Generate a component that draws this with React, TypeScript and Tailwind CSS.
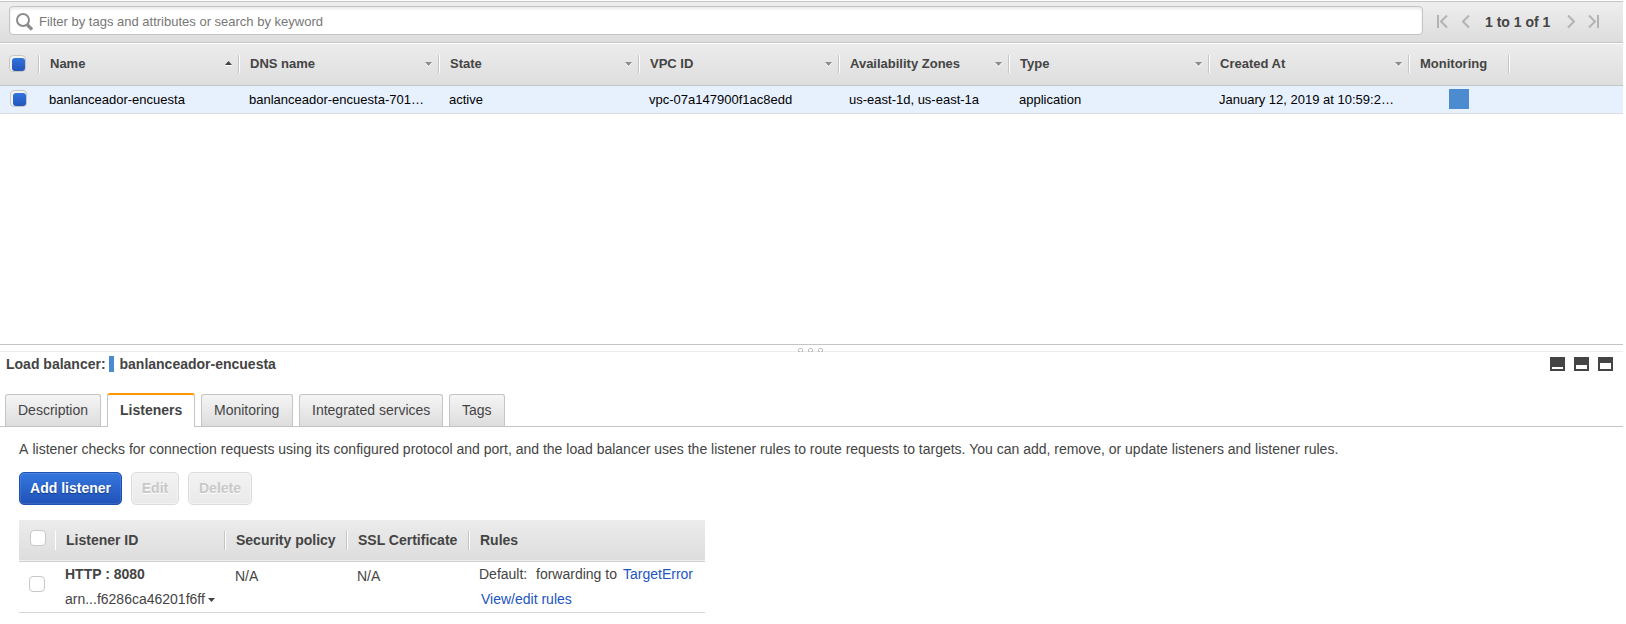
import React from "react";

type Column = { label: string; width: string; value: string; arrow: "up" | "down" };

const columns: Column[] = [
  { label: "Name", width: "w-[200px]", value: "banlanceador-encuesta", arrow: "up" },
  { label: "DNS name", width: "w-[200px]", value: "banlanceador-encuesta-701…", arrow: "down" },
  { label: "State", width: "w-[200px]", value: "active", arrow: "down" },
  { label: "VPC ID", width: "w-[200px]", value: "vpc-07a147900f1ac8edd", arrow: "down" },
  { label: "Availability Zones", width: "w-[170px]", value: "us-east-1d, us-east-1a", arrow: "down" },
  { label: "Type", width: "w-[200px]", value: "application", arrow: "down" },
  { label: "Created At", width: "w-[200px]", value: "January 12, 2019 at 10:59:2…", arrow: "down" },
];

function Divider({ className = "" }: { className?: string }) {
  return <span className={`w-[2px] shrink-0 border-l border-[#c4c4c4] bg-white ${className}`} />;
}

function Arrow({ up = false }: { up?: boolean }) {
  return (
    <svg width="7" height="6" viewBox="0 0 7 6" className="block shrink-0">
      <path d={up ? "M0 5h7v1H0z" : "M0 2h7L3.5 6z"} fill="#fff" />
      <path d={up ? "M0 5h7L3.5 1z" : "M0 1h7L3.5 5z"} fill={up ? "#444" : "#8c8c8c"} />
    </svg>
  );
}

function CheckedBox() {
  return (
    <span className="flex h-[17px] w-[17px] shrink-0 items-end justify-end rounded-[4px] border border-[#c6c6c6] bg-[#f3f3f3]">
      <span className="h-[13px] w-[13px] rounded-[3px] bg-gradient-to-b from-[#3274dc] to-[#2355ba]" />
    </span>
  );
}

function EmptyBox() {
  return <span className="block h-4 w-4 rounded-[4px] border border-[#c8c8c8] bg-white" />;
}

function Pager() {
  return (
    <div className="ml-[14px] flex h-[14px] items-center">
      <svg width="11" height="14" viewBox="0 0 11 14" fill="none" stroke="#b3b3b3" strokeWidth="2">
        <path d="M1 0v13M10 .5L4 6.5l6 6" />
      </svg>
      <svg width="8" height="14" viewBox="0 0 8 14" fill="none" stroke="#b3b3b3" strokeWidth="2" className="ml-[14px]">
        <path d="M7 .5L1 6.5l6 6" />
      </svg>
      <span className="ml-[15px] w-[67px] text-sm leading-4 font-bold whitespace-nowrap">1 to 1 of 1</span>
      <svg width="8" height="14" viewBox="0 0 8 14" fill="none" stroke="#b3b3b3" strokeWidth="2" className="ml-[15px]">
        <path d="M1 .5l6 6-6 6" />
      </svg>
      <svg width="11" height="14" viewBox="0 0 11 14" fill="none" stroke="#b3b3b3" strokeWidth="2" className="ml-[13px]">
        <path d="M1 .5l6 6-6 6M10 0v13" />
      </svg>
    </div>
  );
}

function SearchBar() {
  return (
    <div className="flex h-[42px] border-y border-[#c4c6c4] bg-gradient-to-b from-[#eeeeee] to-[#dddddd] pt-1 pl-[9px]">
      <div className="flex h-[29px] w-[1414px] items-center rounded-[4px] border border-[#c4c4c4] bg-white pl-[6px] shadow-[inset_0_2px_3px_#e9e9e9]">
        <svg width="17" height="18" viewBox="0 0 17 18" fill="none" stroke="#8c8c8c" className="mt-[3px] shrink-0">
          <circle cx="7" cy="7" r="6" strokeWidth="2" />
          <path d="M11 11.5l5 5" strokeWidth="3.2" />
        </svg>
        <span className="mt-[2px] ml-[6px] text-[13px] leading-[15px] text-[#777]">
          Filter by tags and attributes or search by keyword
        </span>
      </div>
      <div className="flex h-[32px] items-center">
        <Pager />
      </div>
    </div>
  );
}

function BalancerTable() {
  return (
    <>
      <div className="flex h-[43px] border-t border-b border-t-white border-b-[#c4c4c4] bg-gradient-to-b from-[#ececec] to-[#dedede] pt-[11px]">
        <div className="w-[38px] pl-[9px]"><CheckedBox /></div>
        {columns.map((c) => (
          <div key={c.label} className={`flex shrink-0 ${c.width}`}>
            <Divider className="h-[18px]" />
            <span className="mt-[1px] ml-[10px] text-[13px] leading-[15px] font-bold">{c.label}</span>
            <span className={`mr-[6px] ml-auto ${c.arrow === "up" ? "mt-[5px]" : "mt-[6px]"}`}>
              <Arrow up={c.arrow === "up"} />
            </span>
          </div>
        ))}
        <div className="flex w-[100px]">
          <Divider className="h-[18px]" />
          <span className="mt-[1px] ml-[10px] text-[13px] leading-[15px] font-bold">Monitoring</span>
        </div>
        <Divider className="h-[18px]" />
      </div>
      <div className="flex h-7 border-b border-[#d9dde2] bg-[#e7f1fe] text-[13px] leading-[15px] text-black">
        <div className="w-[38px] pt-1 pl-[10px]"><CheckedBox /></div>
        {columns.map((c) => (
          <div key={c.label} className={`shrink-0 pt-[6px] pl-[11px] whitespace-nowrap ${c.width}`}>{c.value}</div>
        ))}
        <div className="pt-[3px] pl-[41px]"><div className="h-5 w-5 bg-[#4c8bcf]" /></div>
      </div>
    </>
  );
}

function PanelIcon({ inner }: { inner: string }) {
  return (
    <svg width="15" height="14" viewBox="0 0 15 14">
      <path d="M0 0h15v14H0z" fill="#444" />
      <path d={inner} fill="#fff" />
    </svg>
  );
}

function DetailHeader() {
  return (
    <>
      <div className="flex h-2 gap-[5px] border-t border-b border-t-[#c4c4c4] border-b-[#ededed] pt-[3px] pl-[798px]">
        {[0, 1, 2].map((i) => (
          <svg key={i} width="5" height="4" viewBox="0 0 5 4" className="shrink-0">
            <path d="M1 0h3v1H1zM0 1h1v3H0zM4 1h1v3H4zM1 3h1v1H1zM3 3h1v1H3z" fill="#c2c2c2" />
          </svg>
        ))}
      </div>
      <div className="flex h-[41px] items-start pt-[4px] pr-[10px] pl-[6px] text-sm leading-4 font-bold">
        <span className="w-[103px]">Load balancer:</span>
        <span className="h-4 w-[5px] bg-[#4c8bcf]" />
        <span className="ml-[5.5px]">banlanceador-encuesta</span>
        <div className="mt-[1px] ml-auto flex gap-[9px]">
          <PanelIcon inner="M2 10h11v2H2z" />
          <PanelIcon inner="M2 8h11v4H2z" />
          <PanelIcon inner="M2 6h11v6H2z" />
        </div>
      </div>
    </>
  );
}

function Tab({ label, width }: { label: string; width: string }) {
  return (
    <div className={`mt-[1px] h-8 rounded-t-[3px] border border-b-0 border-[#c4c4c4] bg-gradient-to-b from-[#f5f5f5] to-[#dddddd] pt-[7px] pl-3 whitespace-nowrap ${width}`}>
      {label}
    </div>
  );
}

function Tabs() {
  return (
    <div className="flex h-[34px] gap-[6px] border-b border-[#c4c4c4] pl-[5px] text-sm leading-4">
      <Tab label="Description" width="w-[96px]" />
      <div className="h-[34px] w-[88px] rounded-t-[3px] border-x border-t-2 border-x-[#c4c4c4] border-t-[#ff9900] bg-white pt-[7px] pl-3 font-bold">
        Listeners
      </div>
      <Tab label="Monitoring" width="w-[92px]" />
      <Tab label="Integrated services" width="w-[144px]" />
      <Tab label="Tags" width="w-[56px]" />
    </div>
  );
}

function Disabled({ label, width }: { label: string; width: string }) {
  return (
    <button className={`h-[33px] rounded-[5px] border border-[#dcdcdc] bg-gradient-to-b from-[#f3f3f3] to-[#e9e9e9] pb-[1px] text-[#c8c8c8] shadow-[inset_0_0_0_1px_#f3f3f3] [text-shadow:0_1px_0_#fff] ${width}`}>
      {label}
    </button>
  );
}

function ListenerTable() {
  return (
    <div className="mt-[15px] w-[686px] text-sm leading-4">
      <div className="flex h-[42px] border-b border-[#d0d0d0] bg-gradient-to-b from-[#ececec] to-[#dddddd] pt-[11px] font-bold shadow-[inset_0_-1px_0_#f0f0f0]">
        <div className="-mt-[1px] w-9 pl-[11px]"><EmptyBox /></div>
        <div className="flex w-[169px]">
          <span className="h-[19px] w-[1px] bg-white" />
          <span className="mt-[1px] ml-[10px]">Listener ID</span>
        </div>
        <div className="flex w-[122px]"><Divider className="h-[19px]" /><span className="mt-[1px] ml-[10px]">Security policy</span></div>
        <div className="flex w-[122px]"><Divider className="h-[19px]" /><span className="mt-[1px] ml-[10px]">SSL Certificate</span></div>
        <div className="flex"><Divider className="h-[19px]" /><span className="mt-[1px] ml-[10px]">Rules</span></div>
      </div>
      <div className="flex h-[51px] border-b border-[#d6d6d6]">
        <div className="w-[46px] pt-[14px] pl-[10px]"><EmptyBox /></div>
        <div className="w-[170px] pt-[4px]">
          <div className="font-bold">HTTP : 8080</div>
          <div className="mt-[9px] flex items-center gap-[3px]">
            <span>arn...f6286ca46201f6ff</span>
            <svg width="7" height="4" viewBox="0 0 7 4" className="mt-[2px]"><path d="M0 0h7L3.5 4z" fill="#444" /></svg>
          </div>
        </div>
        <div className="w-[122px] pt-[6px]">N/A</div>
        <div className="w-[122px] pt-[6px]">N/A</div>
        <div className="pt-[4px] whitespace-nowrap">
          <div className="flex">
            <span className="w-[57px]">Default:</span>
            <span className="w-[87px]">forwarding to</span>
            <a className="text-[#2255c0]">TargetError</a>
          </div>
          <a className="mt-[9px] block pl-[2px] text-[#2255c0]">View/edit rules</a>
        </div>
      </div>
    </div>
  );
}

export default function App() {
  return (
    <div className="h-[624px] w-[1626px] overflow-hidden bg-white font-['Liberation_Sans',Arial,sans-serif] text-[#444]">
      <div className="flex w-[1623px] flex-col pt-[1px]">
        <SearchBar />
        <BalancerTable />
        <div className="h-[230px]" />
        <DetailHeader />
        <Tabs />
        <div className="pt-[14px] pl-[19px]">
          <p className="text-sm leading-4">
            <span className="mr-[0.2px]">A</span> listener checks for connection requests using its configured protocol and port, and the load balancer uses the listener rules to route requests to targets. You can add, remove, or update listeners and listener rules.
          </p>
          <div className="mt-[15px] flex gap-[9px] text-sm leading-4 font-bold">
            <button className="h-[33px] w-[103px] rounded-[5px] border border-[#1f4fb0] bg-gradient-to-b from-[#3577de] to-[#2152b8] pb-[1px] whitespace-nowrap text-white shadow-[inset_0_0_0_1px_#ffffff1a] [text-shadow:0_1px_1px_#123a85]">
              Add listener
            </button>
            <Disabled label="Edit" width="w-[48px]" />
            <Disabled label="Delete" width="w-[64px]" />
          </div>
          <ListenerTable />
        </div>
      </div>
    </div>
  );
}
